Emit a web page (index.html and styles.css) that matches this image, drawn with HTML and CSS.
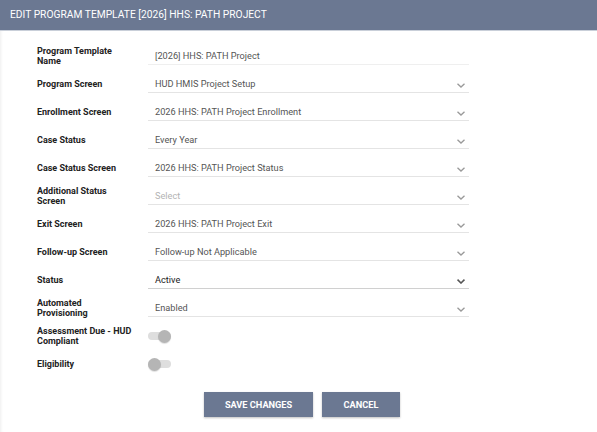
FILE: index.html
```html
<!DOCTYPE html>
<html lang="en">
<head>
<meta charset="utf-8">
<title>Edit Program Template</title>
<link rel="stylesheet" href="styles.css">
</head>
<body>
<div class="page">
  <header class="header">EDIT PROGRAM TEMPLATE [2026] HHS: PATH PROJECT</header>
  <main class="panel">
    <div class="row">
      <div class="label">Program Template Name</div>
      <div class="field text">[2026] HHS: PATH Project</div>
    </div>
    <div class="row">
      <div class="label">Program Screen</div>
      <div class="field select"><span>HUD HMIS Project Setup</span><svg class="chev" viewBox="0 0 8 5"><path d="M0.5 0.7 L4 4 L7.5 0.7"/></svg></div>
    </div>
    <div class="row">
      <div class="label">Enrollment Screen</div>
      <div class="field select"><span>2026 HHS: PATH Project Enrollment</span><svg class="chev" viewBox="0 0 8 5"><path d="M0.5 0.7 L4 4 L7.5 0.7"/></svg></div>
    </div>
    <div class="row">
      <div class="label">Case Status</div>
      <div class="field select"><span>Every Year</span><svg class="chev" viewBox="0 0 8 5"><path d="M0.5 0.7 L4 4 L7.5 0.7"/></svg></div>
    </div>
    <div class="row">
      <div class="label">Case Status Screen</div>
      <div class="field select"><span>2026 HHS: PATH Project Status</span><svg class="chev" viewBox="0 0 8 5"><path d="M0.5 0.7 L4 4 L7.5 0.7"/></svg></div>
    </div>
    <div class="row">
      <div class="label">Additional Status Screen</div>
      <div class="field select"><span class="placeholder">Select</span><svg class="chev" viewBox="0 0 8 5"><path d="M0.5 0.7 L4 4 L7.5 0.7"/></svg></div>
    </div>
    <div class="row">
      <div class="label">Exit Screen</div>
      <div class="field select"><span>2026 HHS: PATH Project Exit</span><svg class="chev" viewBox="0 0 8 5"><path d="M0.5 0.7 L4 4 L7.5 0.7"/></svg></div>
    </div>
    <div class="row">
      <div class="label">Follow-up Screen</div>
      <div class="field select"><span>Follow-up Not Applicable</span><svg class="chev" viewBox="0 0 8 5"><path d="M0.5 0.7 L4 4 L7.5 0.7"/></svg></div>
    </div>
    <div class="row">
      <div class="label">Status</div>
      <div class="field select active"><span>Active</span><svg class="chev" viewBox="0 0 8 5"><path d="M0.5 0.7 L4 4 L7.5 0.7"/></svg></div>
    </div>
    <div class="row">
      <div class="label">Automated Provisioning</div>
      <div class="field select"><span>Enabled</span><svg class="chev" viewBox="0 0 8 5"><path d="M0.5 0.7 L4 4 L7.5 0.7"/></svg></div>
    </div>
    <div class="row">
      <div class="label">Assessment Due - HUD Compliant</div>
      <div class="toggle on"><span class="track"></span><span class="knob"></span></div>
    </div>
    <div class="row">
      <div class="label">Eligibility</div>
      <div class="toggle"><span class="track"></span><span class="knob"></span></div>
    </div>
    <div class="actions">
      <button class="btn save">SAVE CHANGES</button>
      <button class="btn cancel">CANCEL</button>
    </div>
  </main>
</div>
</body>
</html>
```
FILE: styles.css
```css
html, body {
  margin: 0;
  padding: 0;
  background: #ffffff;
}
body {
  font-family: Roboto, "Liberation Sans", Arial, sans-serif;
  color: #222;
}
.page {
  width: 597px;
  height: 432px;
  overflow: hidden;
}
.header {
  height: 31px;
  line-height: 30px;
  background: #6b7892;
  color: #fff;
  font-size: 10.25px;
  padding-left: 10px;
  border-bottom: 1px solid #c9cfd9;
  box-sizing: border-box;
}
.panel {
  padding: 11px 0 0 37px;
  box-shadow: inset 3px 0 3px -2px rgba(0,0,0,0.07);
  height: 401px;
  box-sizing: border-box;
}
.row {
  display: grid;
  grid-template-columns: 111px 321px;
  align-items: center;
  height: 28px;
}
.label {
  font-size: 9px;
  font-weight: 700;
  line-height: 10px;
  color: #222;
  padding-right: 15.5px;
}
.field {
  height: 18px;
  box-sizing: border-box;
  border-bottom: 1px solid #e4e4e4;
  display: flex;
  align-items: center;
  justify-content: space-between;
  padding: 0 4px 0 7px;
  font-size: 9.2px;
  color: #555;
}
.field.text {
  border-bottom-color: #efefef;
}
.field.active {
  color: #222;
  border-bottom-color: #d0d0d0;
}
.placeholder {
  color: #b3b3b3;
}
.chev {
  width: 8px;
  height: 5px;
  margin-top: 3px;
  fill: none;
  stroke: #9a9a9a;
  stroke-width: 1.3;
}
.active .chev {
  stroke: #555;
  stroke-width: 1.6;
}
.toggle {
  position: relative;
  width: 24px;
  height: 14px;
}
.track {
  position: absolute;
  left: 0;
  top: 3px;
  width: 23px;
  height: 8px;
  border-radius: 4px;
  background: #dedede;
}
.knob {
  position: absolute;
  top: 1px;
  left: 0;
  width: 13px;
  height: 13px;
  border-radius: 50%;
  background: #b5b5b5;
  box-shadow: 0 1px 1px rgba(0,0,0,0.12);
}
.toggle.on .knob {
  left: 10px;
}
.actions {
  display: flex;
  gap: 9px;
  margin-top: 14px;
  padding-left: 167px;
  justify-content: flex-start;
}
.btn {
  height: 25px;
  border: none;
  background: #6b7892;
  color: #fff;
  font-family: Roboto, "Liberation Sans", Arial, sans-serif;
  font-size: 9.2px;
  font-weight: 700;
  box-shadow: 0 1px 2px rgba(0,0,0,0.25);
  padding: 0;
  cursor: pointer;
}
.save { width: 109px; }
.cancel { width: 78px; }
```
